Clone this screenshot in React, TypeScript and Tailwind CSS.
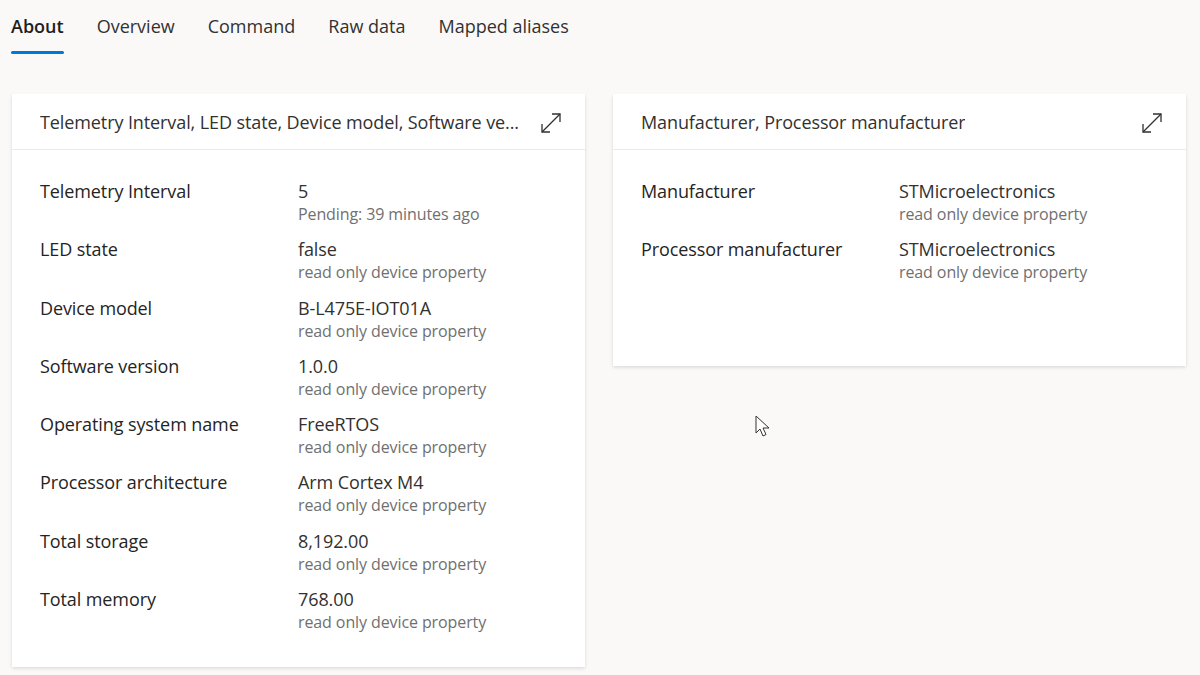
import React from 'react'

interface Prop {
  label: string
  value: string
  note: string
}

const leftProps: Prop[] = [
  { label: 'Telemetry Interval', value: '5', note: 'Pending: 39 minutes ago' },
  { label: 'LED state', value: 'false', note: 'read only device property' },
  { label: 'Device model', value: 'B-L475E-IOT01A', note: 'read only device property' },
  { label: 'Software version', value: '1.0.0', note: 'read only device property' },
  { label: 'Operating system name', value: 'FreeRTOS', note: 'read only device property' },
  { label: 'Processor architecture', value: 'Arm Cortex M4', note: 'read only device property' },
  { label: 'Total storage', value: '8,192.00', note: 'read only device property' },
  { label: 'Total memory', value: '768.00', note: 'read only device property' },
]

const rightProps: Prop[] = [
  { label: 'Manufacturer', value: 'STMicroelectronics', note: 'read only device property' },
  { label: 'Processor manufacturer', value: 'STMicroelectronics', note: 'read only device property' },
]

const tabs = ['About', 'Overview', 'Command', 'Raw data', 'Mapped aliases']

const ExpandIcon = () => (
  <svg width="22" height="22" viewBox="0 0 22 22" fill="none" stroke="#323130" strokeWidth="1.3">
    <path d="M2 20 L20 2" />
    <path d="M12 2 H20 V10" />
    <path d="M2 12 V20 H10" />
  </svg>
)

const Card: React.FC<{ title: string; items: Prop[]; className?: string }> = ({ title, items, className }) => (
  <div
    className={`w-[573px] bg-white shadow-[0_1.6px_3.6px_rgba(0,0,0,0.13),0_0.3px_0.9px_rgba(0,0,0,0.11)] ${className ?? ''}`}
  >
    <div className="h-[56px] flex items-center justify-between pl-[28px] pr-[23px] pt-[2px] border-b border-[#edebe9]">
      <span className="text-[18px] text-[#323130] truncate">{title}</span>
      <ExpandIcon />
    </div>
    <div className="pt-[30px] pl-[28px]">
      {items.map((p) => (
        <div key={p.label} className="flex h-[58.3px]">
          <div className="w-[258px] text-[18px] leading-[23px] text-[#252423]">{p.label}</div>
          <div>
            <div className="text-[18px] leading-[23px] text-[#323130]">{p.value}</div>
            <div className="text-[16px] leading-[22px] text-[#707070]">{p.note}</div>
          </div>
        </div>
      ))}
    </div>
  </div>
)

const App: React.FC = () => {
  return (
    <div className="relative w-[1200px] h-[675px] overflow-hidden bg-[#faf9f8] font-['Open_Sans',sans-serif] tracking-[-0.1px]">
      <div className="flex gap-[33px] pl-[11px] h-[55px] tracking-normal">
        {tabs.map((t, i) => (
          <div key={t} className="flex flex-col items-start">
            <span
              className={`text-[18px] leading-[24px] mt-[14px] ${
                i === 0 ? 'font-semibold text-[#201f1e]' : 'text-[#323130]'
              }`}
            >
              {t}
            </span>
            {i === 0 && <div className="mt-[13px] h-[3px] w-full bg-[#0078d4] rounded-sm" />}
          </div>
        ))}
      </div>
      <div className="flex items-start gap-[28px] pl-[12px] pt-[39px]">
        <Card title="Telemetry Interval, LED state, Device model, Software ve..." items={leftProps} className="h-[573px]" />
        <Card title="Manufacturer, Processor manufacturer" items={rightProps} className="h-[272px]" />
      </div>
      <svg className="absolute left-[755px] top-[415px]" width="18" height="26" viewBox="0 0 18 26">
        <path d="M1 1 L1 18 L5 14 L8 21 L11 19.5 L8 13 L14 13 Z" fill="white" stroke="#333" strokeWidth="1" />
      </svg>
    </div>
  )
}

export default App
